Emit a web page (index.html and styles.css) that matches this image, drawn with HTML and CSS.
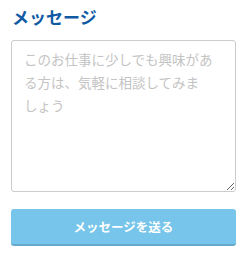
FILE: index.html
```html
<!DOCTYPE html>
<html lang="ja">
<head>
<meta charset="utf-8">
<link rel="stylesheet" href="styles.css">
</head>
<body>
<div class="form">
  <h2 class="title">メッセージ</h2>
  <textarea class="message" placeholder="このお仕事に少しでも興味がある方は、気軽に相談してみましょう"></textarea>
  <button class="send" type="button">メッセージを送る</button>
</div>
</body>
</html>
```
FILE: styles.css
```css
html, body {
  margin: 0;
  padding: 0;
  background: #fff;
}
body {
  font-family: "Noto Sans CJK JP", "Noto Sans", sans-serif;
}
.form {
  display: flex;
  flex-direction: column;
  padding: 6px 12px 0 11px;
}
.title {
  margin: 0 0 0 1px;
  font-size: 17px;
  line-height: 22px;
  font-weight: 700;
  color: #0f5aa3;
}
.message {
  margin-top: 12px;
  box-sizing: border-box;
  width: 225px;
  height: 152px;
  border: 1px solid #cccccc;
  border-radius: 3px;
  padding: 7px 10px 7px 12px;
  font-family: inherit;
  font-size: 13.5px;
  line-height: 23px;
  line-break: strict;
  resize: vertical;
  outline: none;
}
.message::placeholder {
  color: #c4c4c4;
  line-break: strict;
}
.send {
  margin-top: 17px;
  box-sizing: border-box;
  width: 225px;
  height: 37px;
  border: none;
  border-bottom: 2px solid #66a9cc;
  border-radius: 3px;
  background: #77c5ea;
  color: #fff;
  font-family: inherit;
  font-size: 12.5px;
  font-weight: 700;
  cursor: pointer;
}
```
